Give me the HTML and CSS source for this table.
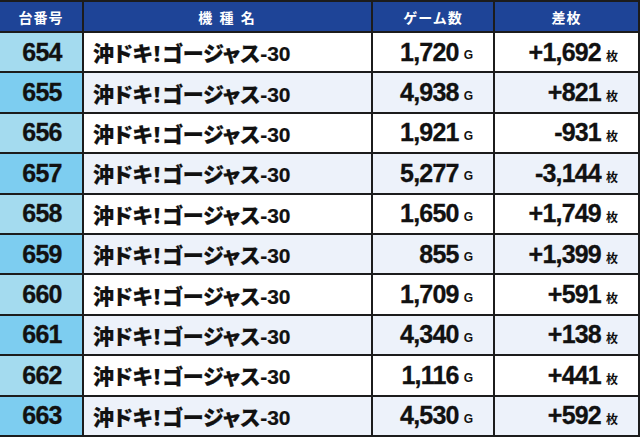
FILE: index.html
```html
<!DOCTYPE html>
<html lang="ja">
<head>
<meta charset="utf-8">
<link rel="stylesheet" href="styles.css">
</head>
<body>
<div class="table">
  <div class="row head">
    <div class="cell">台番号</div>
    <div class="cell spaced">機 種 名</div>
    <div class="cell">ゲーム数</div>
    <div class="cell">差枚</div>
  </div>
  <div class="row odd">
    <div class="cell no">654</div><div class="cell name">沖ドキ！ゴージャス-30</div>
    <div class="cell num">1,720<span class="unit">G</span></div><div class="cell num">+1,692<span class="unit">枚</span></div>
  </div>
  <div class="row even">
    <div class="cell no">655</div><div class="cell name">沖ドキ！ゴージャス-30</div>
    <div class="cell num">4,938<span class="unit">G</span></div><div class="cell num">+821<span class="unit">枚</span></div>
  </div>
  <div class="row odd">
    <div class="cell no">656</div><div class="cell name">沖ドキ！ゴージャス-30</div>
    <div class="cell num">1,921<span class="unit">G</span></div><div class="cell num">-931<span class="unit">枚</span></div>
  </div>
  <div class="row even">
    <div class="cell no">657</div><div class="cell name">沖ドキ！ゴージャス-30</div>
    <div class="cell num">5,277<span class="unit">G</span></div><div class="cell num">-3,144<span class="unit">枚</span></div>
  </div>
  <div class="row odd">
    <div class="cell no">658</div><div class="cell name">沖ドキ！ゴージャス-30</div>
    <div class="cell num">1,650<span class="unit">G</span></div><div class="cell num">+1,749<span class="unit">枚</span></div>
  </div>
  <div class="row even">
    <div class="cell no">659</div><div class="cell name">沖ドキ！ゴージャス-30</div>
    <div class="cell num">855<span class="unit">G</span></div><div class="cell num">+1,399<span class="unit">枚</span></div>
  </div>
  <div class="row odd">
    <div class="cell no">660</div><div class="cell name">沖ドキ！ゴージャス-30</div>
    <div class="cell num">1,709<span class="unit">G</span></div><div class="cell num">+591<span class="unit">枚</span></div>
  </div>
  <div class="row even">
    <div class="cell no">661</div><div class="cell name">沖ドキ！ゴージャス-30</div>
    <div class="cell num">4,340<span class="unit">G</span></div><div class="cell num">+138<span class="unit">枚</span></div>
  </div>
  <div class="row odd">
    <div class="cell no">662</div><div class="cell name">沖ドキ！ゴージャス-30</div>
    <div class="cell num">1,116<span class="unit">G</span></div><div class="cell num">+441<span class="unit">枚</span></div>
  </div>
  <div class="row even">
    <div class="cell no">663</div><div class="cell name">沖ドキ！ゴージャス-30</div>
    <div class="cell num">4,530<span class="unit">G</span></div><div class="cell num">+592<span class="unit">枚</span></div>
  </div>
</div>
</body>
</html>
```
FILE: styles.css
```css
html, body {
  margin: 0;
  padding: 0;
  background: #ffffff;
}
body {
  width: 640px;
  height: 437px;
  overflow: hidden;
  font-family: "Liberation Sans", "Noto Sans CJK JP", sans-serif;
  font-weight: bold;
  color: #111111;
}
.table {
  display: grid;
  grid-template-columns: 82px 287px 120px 143px;
  grid-template-rows: 29px repeat(10, 38.4px);
  gap: 2px;
  padding: 2px 2px 2px 0;
  background: #1c1c1c;
  width: 640px;
  height: 437px;
  box-sizing: border-box;
}
.row {
  display: contents;
}
.cell {
  display: flex;
  align-items: center;
  overflow: hidden;
  white-space: nowrap;
}
.head .cell {
  background: #1e4497;
  color: #ffffff;
  font-family: "Noto Sans CJK JP", sans-serif;
  font-size: 14px;
  font-weight: bold;
  justify-content: center;
  letter-spacing: 1px;
}
.head .spaced {
  letter-spacing: 2px;
}
.odd .cell { background: #ffffff; }
.even .cell { background: #edf2fa; }
.odd .no { background: #a4dbef; }
.even .no { background: #7dcdf0; }
.no {
  justify-content: center;
  font-size: 25px;
  letter-spacing: -0.8px;
  padding-left: 2px;
  -webkit-text-stroke: 0.3px #111111;
}
.name {
  font-family: "Liberation Sans", "Noto Sans CJK JP", sans-serif;
  font-size: 21px;
  font-weight: 900;
  font-feature-settings: "palt";
  padding-left: 9px;
  letter-spacing: 0;
  -webkit-text-stroke: 0.2px #111111;
}
.num {
  justify-content: flex-end;
  font-size: 25px;
  letter-spacing: -0.8px;
  padding-right: 20px;
  -webkit-text-stroke: 0.3px #111111;
}
.unit {
  font-family: "Liberation Sans", "Noto Sans CJK JP", sans-serif;
  font-size: 12px;
  letter-spacing: 0;
  margin-left: 5px;
  margin-top: 6px;
  -webkit-text-stroke: 0;
}
```
